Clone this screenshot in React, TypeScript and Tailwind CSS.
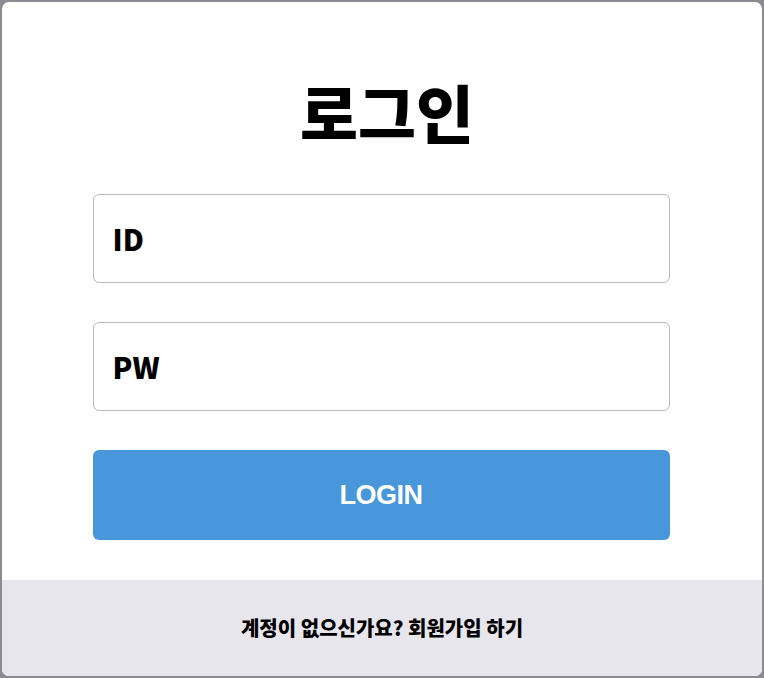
import React from "react";

export default function App() {
  return (
    <div className="w-[764px] h-[678px] bg-[#8c8b92] p-[2px]">
      <div className="w-full h-full bg-white rounded-[7px] overflow-hidden flex flex-col">
        <div className="flex-1 flex flex-col items-center">
          <h1
            className="mt-[69px] ml-[10px] h-[79px] flex items-center text-[63px] leading-none font-black text-black"
            style={{ fontFamily: '"Noto Sans CJK KR", sans-serif' }}
          >
            로그인
          </h1>
          <div className="mt-[44px] w-[577px] -translate-x-[1px] flex flex-col gap-[39px]">
            <div className="h-[89px] border-[1.5px] border-[#b9b9bd] rounded-[6px] flex items-center pl-[19px]">
              <span
                className="text-[29px] font-black text-black"
                style={{ fontFamily: '"Noto Sans CJK KR", sans-serif' }}
              >
                ID
              </span>
            </div>
            <div className="h-[89px] border-[1.5px] border-[#b9b9bd] rounded-[6px] flex items-center pl-[19px]">
              <span
                className="text-[29px] font-black text-black"
                style={{ fontFamily: '"Noto Sans CJK KR", sans-serif' }}
              >
                PW
              </span>
            </div>
            <button className="h-[90px] bg-[#4797da] rounded-[6px] flex items-center justify-center">
              <span
                className="text-[27px] font-bold text-white tracking-[-0.5px]"
                style={{ fontFamily: '"Liberation Sans", Arial, sans-serif' }}
              >
                LOGIN
              </span>
            </button>
          </div>
        </div>
        <div className="h-[96px] bg-[#e8e6ed] flex items-center justify-center">
          <span
            className="text-[20px] font-black text-black"
            style={{ fontFamily: '"Noto Sans CJK KR", sans-serif' }}
          >
            계정이 없으신가요? 회원가입 하기
          </span>
        </div>
      </div>
    </div>
  );
}
